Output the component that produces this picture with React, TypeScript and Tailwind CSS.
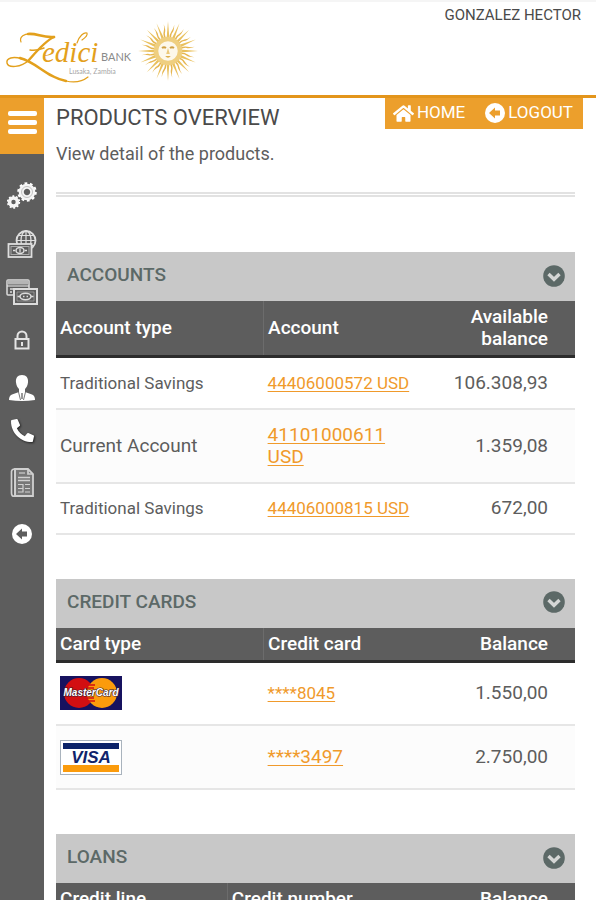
import React from "react";
import { FaHome, FaPhoneAlt } from "react-icons/fa";

const RAYS = Array.from({ length: 32 }, (_, i) => i);

function Sun() {
  return (
    <g transform="translate(168 51)">
      {RAYS.map((i) => (
        <path
          key={i}
          transform={`rotate(${i * 11.25})`}
          d={i % 2 === 0 ? "M-1.400 -12L0 -30L1.400 -12Z" : "M-.8 -12Q-2 -17 -.4 -20T1 -27Q2 -21 .8 -19T.8 -12Z"}
          fill={i % 2 === 0 ? "#e9c05c" : "#e6b650"}
        />
      ))}
      <circle r="12" fill="#fdf8ea" stroke="#efcf80" strokeWidth="4.500" />
      <path d="M-6 -3Q-4 -4.500 -2 -3M2 -3Q4 -4.500 6 -3" fill="none" stroke="#cfa044" strokeWidth="2" />
      <path d="M0 -3L-1.800 3H1.800Z" fill="#ecc97a" />
      <path d="M-2.800 5Q0 8.500 2.800 5Z" fill="#dcae4c" />
    </g>
  );
}

function Logo() {
  return (
    <svg className="block h-[93px] w-[210px]" viewBox="0 2 210 93" role="img" aria-label="Zedici Bank">
      <g fill="none" stroke="#e3a01c" strokeLinecap="round" strokeLinejoin="round">
        <path d="M21 42C19 37 24 33 32 34" strokeWidth="1.200" />
        <path d="M28 34C37 33 42 38 54 37" strokeWidth="2.600" />
        <path d="M54 37C45 41 36 52 29 60" strokeWidth="2.400" />
        <path d="M30 50Q36 51 44 48" strokeWidth="1.500" />
        <path d="M29 60C21 68 8 68 7 63C6 58 13 56 22 59" strokeWidth="1.400" />
        <path d="M20 58C38 63 46 77 66 81" strokeWidth="2.400" />
        <path d="M66 81C75 83 83 81 88 77" strokeWidth="1.200" />
        <path d="M77 43C79 36 84 32 87 33Q88 36 82 40" strokeWidth="1.200" />
      </g>
      <text x="42" y="62" fill="#e3a01c" fontFamily="'Liberation Serif', serif" fontStyle="italic" fontSize="29">
        edici
      </text>
      <text x="101" y="61" fill="#8a8a8a" fontFamily="Lato, sans-serif" fontSize="11">
        BANK
      </text>
      <text x="69" y="74" fill="#a6a6a6" fontFamily="Lato, sans-serif" fontSize="7">
        Lusaka, Zambia
      </text>
      <Sun />
    </svg>
  );
}

function ArrowCircle({ className, color }: { className: string; color: string }) {
  return (
    <svg className={className} viewBox="0 0 20 20" aria-hidden="true">
      <circle cx="10" cy="10" r="10" fill="#fff" />
      <path d="M4 10L10 4.500V7.500H15V12.500H10V15.500Z" fill={color} />
    </svg>
  );
}

function ChevronCircle() {
  return (
    <svg className="size-[22px]" viewBox="0 0 22 22" aria-hidden="true">
      <circle cx="11" cy="11" r="10.800" fill="#5c6967" />
      <path d="M5.500 9L11 14.300L16.500 9" fill="none" stroke="#d4d6d5" strokeWidth="3.400" />
    </svg>
  );
}

function Gear({ x, y, r }: { x: number; y: number; r: number }) {
  return (
    <g transform={`translate(${x} ${y})`}>
      <circle r={r} fill="none" stroke="#fff" strokeWidth={r * 0.3} strokeDasharray={`${(r * Math.PI) / 10} ${(r * Math.PI) / 10}`} />
      <circle r={r * 0.68} fill="none" stroke="#f4f4f4" strokeWidth={r * 0.6} />
    </g>
  );
}

function GearsIcon() {
  return (
    <svg className="h-[28px] w-[30px]" viewBox="0 0 30 28" aria-hidden="true">
      <Gear x={20} y={10} r={8.5} />
      <circle cx="20" cy="10" r="5.500" fill="none" stroke="#aaa" strokeWidth=".7" />
      <Gear x={6.5} y={20} r={5.8} />
    </svg>
  );
}

function GlobeMoneyIcon() {
  return (
    <svg className="h-[28px] w-[30px]" viewBox="0 0 30 28" fill="none" stroke="#dedede" aria-hidden="true">
      <circle cx="19" cy="10.500" r="9.500" strokeWidth="1.800" />
      <path d="M19 1V20M9.500 10.500H28.500M11.500 5.500H26.500M11.500 15.500H26.500" strokeWidth="1.200" />
      <ellipse cx="19" cy="10.500" rx="5" ry="9.500" strokeWidth="1.300" />
      <rect x="1.500" y="14" width="23" height="13" fill="#5d5d5d" strokeWidth="1.800" />
      <rect x="4" y="16.500" width="18" height="8" strokeWidth="1" stroke="#aaa" />
      <ellipse cx="13" cy="20.500" rx="4" ry="3" strokeWidth="1.500" />
      <path d="M13 18.500V22.500M6 20.500H8M18 20.500H20" strokeWidth="1.300" />
    </svg>
  );
}

function CardsIcon() {
  return (
    <svg className="h-[28px] w-[32px]" viewBox="0 0 32 28" fill="none" stroke="#dcdcdc" aria-hidden="true">
      <rect x="1" y="2" width="22" height="15" rx="1" strokeWidth="1.500" />
      <path d="M1 4.500H23" strokeWidth="4" stroke="#b5b5b5" />
      <path d="M1 8H23" strokeWidth="1.200" />
      <path d="M4 11H7M4 14H6" strokeWidth="1.300" />
      <rect x="8" y="11" width="23" height="15" fill="#5d5d5d" strokeWidth="2" />
      <path d="M11 14H28V23H11Z" strokeWidth=".7" stroke="#aaa" />
      <ellipse cx="19.500" cy="18.500" rx="5.500" ry="3.200" strokeWidth="1.500" />
      <path d="M17 18.500H18.500M20.500 18.500H22M14 18.500H11.500M27.500 18.500H25" strokeWidth="1.600" />
    </svg>
  );
}

function LockIcon() {
  return (
    <svg className="h-[20px] w-[18px]" viewBox="0 0 18 20" fill="none" stroke="#e4e4e4" aria-hidden="true">
      <path d="M4.500 9V6A4.500 4.500 0 0 1 13.500 6V9" strokeWidth="2" />
      <rect x="2.500" y="9" width="13" height="9.500" strokeWidth="2" />
      <path d="M9 12V16" strokeWidth="2" />
    </svg>
  );
}

function PersonIcon() {
  return (
    <svg className="h-[28px] w-[28px]" viewBox="0 0 28 28" aria-hidden="true">
      <path d="M14 1C9.500 1 7.500 4 8 8.500C8.300 12 10 14 11 15V18L4 20.500C2 21.500 1 23 1 26Q14 28 27 26C27 23 26 21.500 24 20.500L17 18V15C18 14 19.700 12 20 8.500C20.500 4 18.500 1 14 1Z" fill="#fff" />
      <path d="M10.500 18L12.500 26M17.500 18L15.500 26" stroke="#777" strokeWidth="1" />
      <path d="M13 19H15V25H13Z" fill="#999" />
    </svg>
  );
}

function DocumentIcon() {
  return (
    <svg className="h-[30px] w-[24px]" viewBox="0 0 24 30" fill="none" stroke="#d0d0d0" aria-hidden="true">
      <path d="M5 1H18L23 6V28H5Z" strokeWidth="1.800" fill="#777" />
      <path d="M5 1Q1 1 1.500 5V25Q1.500 29 5 28V1M18 1V6H23" strokeWidth="1.700" />
      <path d="M9 5H15" strokeWidth="1.200" />
      <path d="M8 9.500H20M8 12.500H20" strokeWidth="1.600" />
      <path d="M8 16.500H13V24H8M15 16.500H20M15 20.500H20M15 24H20M8 20.500H13" strokeWidth="1.200" />
    </svg>
  );
}

const MENU: { label: string; icon: React.ReactNode; height: string }[] = [
  { label: "Settings", icon: <GearsIcon />, height: "h-12" },
  { label: "Transfers", icon: <GlobeMoneyIcon />, height: "h-12" },
  { label: "Payments", icon: <CardsIcon />, height: "h-12" },
  { label: "Security", icon: <LockIcon />, height: "h-12" },
  { label: "Profile", icon: <PersonIcon />, height: "h-12" },
  { label: "Contact", icon: <FaPhoneAlt className="size-[23px] text-white drop-shadow-[1px_1px_1px_#222]" />, height: "h-9" },
  { label: "Statements", icon: <DocumentIcon />, height: "h-[70px]" },
  { label: "Log out", icon: <ArrowCircle className="size-5" color="#5d5d5d" />, height: "h-8" },
];

function MasterCard() {
  return (
    <svg className="block h-[34px] w-[62px]" viewBox="0 0 62 34" role="img" aria-label="MasterCard">
      <rect width="62" height="34" fill="#17125f" />
      <circle cx="19" cy="17" r="15" fill="#d20f12" />
      <circle cx="42" cy="17" r="15" fill="#fb9b0c" />
      <path d="M28 9H35M27 12H34M27 22H34M28 25H35" stroke="#d20f12" strokeWidth="1.500" />
      <text x="31" y="20" textAnchor="middle" fill="#fff" stroke="#3a1c30" strokeWidth="1.200" paintOrder="stroke" fontFamily="'Liberation Sans', sans-serif" fontWeight="bold" fontStyle="italic" fontSize="10">
        MasterCard
      </text>
    </svg>
  );
}

function Visa() {
  return (
    <svg className="block h-[35px] w-[62px]" viewBox="0 0 62 35" role="img" aria-label="Visa">
      <rect x=".5" y=".5" width="61" height="34" fill="#fff" stroke="#a9b3bd" />
      <rect x="3" y="3" width="56" height="6" fill="#0b2268" />
      <rect x="3" y="25" width="56" height="7" fill="#fb9b0c" />
      <text x="31" y="23" textAnchor="middle" fill="#10246b" fontFamily="'Liberation Sans', sans-serif" fontWeight="bold" fontStyle="italic" fontSize="17">
        VISA
      </text>
    </svg>
  );
}

function Section({ title, first, heads, children }: { title: string; first: string; heads: string[]; children?: React.ReactNode }) {
  return (
    <section className="mb-[44px]">
      <div className="flex h-[49px] items-center justify-between bg-[#c8c8c8] pr-[10px] pb-[2px] pl-[11px]">
        <h2 className="text-[19px] font-medium text-[#5c6967]">{title}</h2>
        <button type="button" aria-label={`Collapse ${title.toLowerCase()}`}>
          <ChevronCircle />
        </button>
      </div>
      <table className="w-full table-fixed border-collapse">
        <thead className="border-b-[3px] border-[#2c2c2c] bg-[#5d5d5d] text-[19px] leading-[22px] text-white">
          <tr>
            <th scope="col" className={`${first} border-r border-[#6c6c6c] px-1 py-[5px] text-left font-medium`}>{heads[0]}</th>
            <th scope="col" className="px-1 py-[5px] text-left font-medium">{heads[1]}</th>
            <th scope="col" className="w-[30%] py-[5px] pr-[27px] text-right font-medium">{heads[2]}</th>
          </tr>
        </thead>
        <tbody className="leading-[22px] text-[#5d5d5d]">{children}</tbody>
      </table>
    </section>
  );
}

function Row({ name, link, amount, height, large }: { name: React.ReactNode; link: string; amount: string; height: string; large?: boolean }) {
  const size = large ? "text-[19px]" : "text-[17px]";
  return (
    <tr className={`${height} border-b-2 border-[#e6e6e6] even:bg-[#fcfcfc]`}>
      <td className={`${size} px-1`}>{name}</td>
      <td className={`${size} px-1`}>
        <a href="#detail" className="text-[#f09a2b] underline underline-offset-2">{link}</a>
      </td>
      <td className="pr-[27px] text-right text-[19px]">{amount}</td>
    </tr>
  );
}

export default function App() {
  return (
    <div className="flex h-screen flex-col overflow-hidden bg-white font-[Roboto,sans-serif]">
      <header className="flex h-[98px] shrink-0 items-start justify-between border-t-2 border-b-3 border-t-[#f5f5f5] border-b-[#e3951b] pr-[15px]">
        <Logo />
        <p className="pt-1 text-[15px] leading-[18px] text-[#4a4a4a]">GONZALEZ HECTOR</p>
      </header>
      <div className="flex min-h-0 flex-1">
        <aside className="flex w-11 shrink-0 flex-col bg-[#5d5d5d]">
          <button type="button" aria-label="Menu" className="flex h-14 flex-col items-center gap-1 bg-[#ec9f2c] pt-[13px]">
            <span className="h-[5px] w-[29px] rounded-xs bg-white" />
            <span className="h-[5px] w-[29px] rounded-xs bg-white" />
            <span className="h-[5px] w-[29px] rounded-xs bg-white" />
          </button>
          <nav aria-label="Main" className="pt-[18px]">
            {MENU.map((item) => (
              <a key={item.label} href="#menu" aria-label={item.label} className={`${item.height} flex items-center justify-center`}>
                {item.icon}
              </a>
            ))}
          </nav>
        </aside>
        <main className="min-w-0 flex-1 overflow-hidden pr-[21px] pl-3">
          <div className="-mr-2 flex items-start justify-between">
            <h1 className="pt-[7px] text-[22px] leading-[26px] text-[#4a4a4a]">PRODUCTS OVERVIEW</h1>
            <nav aria-label="Session" className="flex h-[31px] items-center gap-5 bg-[#ec9f2c] pr-[10px] pb-px pl-2 text-[17px] text-white">
              <a href="#home" className="flex items-center gap-[3px]">
                <FaHome className="size-[21px]" />
                HOME
              </a>
              <a href="#logout" className="flex items-center gap-[3px]">
                <ArrowCircle className="size-5" color="#ec9f2c" />
                LOGOUT
              </a>
            </nav>
          </div>
          <p className="mt-3 text-[18px] leading-[22px] text-[#5d5d5d]">View detail of the products.</p>
          <hr className="mt-[27px] mb-[55px] h-[5px] border-y-2 border-[#e2e2e2]" />
          <Section title="ACCOUNTS" first="w-[40%]" heads={["Account type", "Account", "Available balance"]}>
            <Row name="Traditional Savings" link="44406000572 USD" amount="106.308,93" height="h-[52px]" />
            <Row name="Current Account" link="41101000611 USD" amount="1.359,08" height="h-[74px]" large />
            <Row name="Traditional Savings" link="44406000815 USD" amount="672,00" height="h-[51px]" />
          </Section>
          <Section title="CREDIT CARDS" first="w-[40%]" heads={["Card type", "Credit card", "Balance"]}>
            <Row name={<MasterCard />} link="****8045" amount="1.550,00" height="h-16" />
            <Row name={<Visa />} link="****3497" amount="2.750,00" height="h-16" large />
          </Section>
          <Section title="LOANS" first="w-[33%]" heads={["Credit line", "Credit number", "Balance"]} />
        </main>
      </div>
    </div>
  );
}
